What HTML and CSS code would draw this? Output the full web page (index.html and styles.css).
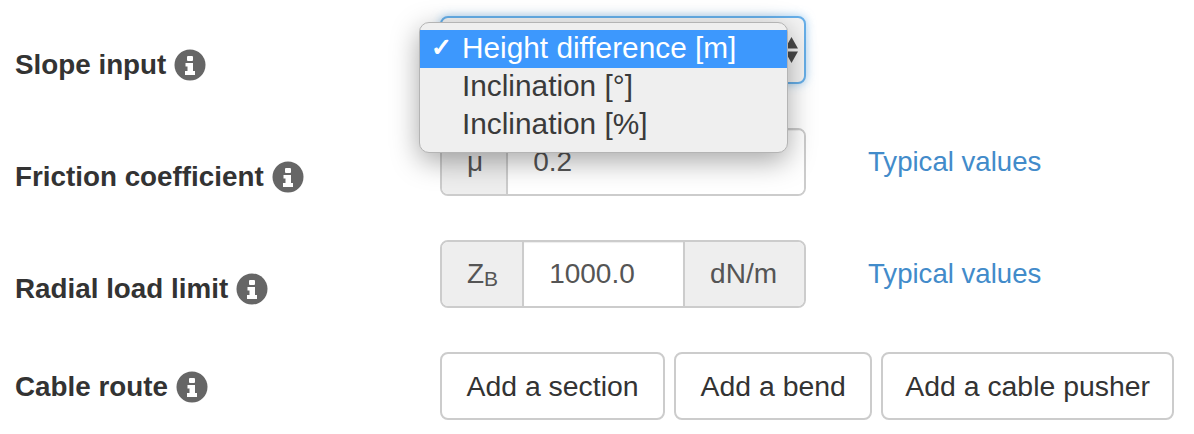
FILE: index.html
```html
<!DOCTYPE html>
<html lang="en">
<head>
  <meta charset="UTF-8" />
  <title>Cable route settings</title>
  <link rel="stylesheet" href="styles.css">
</head>
<body>
  <svg class="defs" width="0" height="0">
    <symbol id="info" viewBox="0 0 32 32">
      <circle cx="16" cy="16" r="15.500" fill="#666" />
      <rect x="13" y="7" width="6" height="5" rx="1" fill="#fff" />
      <path d="M11.500 14h7.500v8h2v4h-10v-4h2.500v-4.500h-2z" fill="#fff" />
    </symbol>
  </svg>

  <form class="settings">
    <div class="row">
      <label class="field-label">Slope input <svg class="info"><use href="#info" /></svg></label>
      <div class="select-wrap">
        <div class="fake-select">
          <svg class="arrows" width="13" height="26" viewBox="0 0 13 26">
            <path d="M6.500 0l6.500 11.500h-13z" fill="#4a4a4a" />
            <path d="M6.500 26l6.500-11.500h-13z" fill="#4a4a4a" />
          </svg>
        </div>
        <ul class="menu">
          <li class="selected"><span class="check">✓</span>Height difference [m]</li>
          <li>Inclination [°]</li>
          <li>Inclination [%]</li>
        </ul>
      </div>
    </div>

    <div class="row">
      <label class="field-label">Friction coefficient <svg class="info"><use href="#info" /></svg></label>
      <div class="input-group">
        <span class="addon">μ</span>
        <input type="text" value="0.2" />
      </div>
      <a class="typical" href="#">Typical values</a>
    </div>

    <div class="row">
      <label class="field-label">Radial load limit <svg class="info"><use href="#info" /></svg></label>
      <div class="input-group">
        <span class="addon">Z<sub>B</sub></span>
        <input class="input-wide" type="text" value="1000.0" />
        <span class="addon addon-right">dN/m</span>
      </div>
      <a class="typical" href="#">Typical values</a>
    </div>

    <div class="row">
      <label class="field-label field-label-center">Cable route <svg class="info"><use href="#info" /></svg></label>
      <div class="buttons">
        <button type="button">Add a section</button>
        <button type="button">Add a bend</button>
        <button class="btn-tight" type="button">Add a cable pusher</button>
      </div>
    </div>
  </form>
</body>
</html>
```

FILE: styles.css
```css
body {
  margin: 0;
  background: #fff;
  color: #333;
  font-family: "Liberation Sans", Arial, sans-serif;
  font-size: 28px;
  overflow: hidden;
}

.defs {
  display: block;
}

.settings {
  display: flex;
  flex-direction: column;
  gap: 44px;
  padding: 16px 0 0 15px;
}

.row {
  display: flex;
  align-items: center;
  height: 68px;
}

.field-label {
  width: 425px;
  flex-shrink: 0;
  display: flex;
  align-items: center;
  gap: 8px;
  padding-top: 30px;
  font-size: 27.8px;
  font-weight: bold;
  color: #333;
}

.field-label-center {
  padding-top: 2px;
}

.info {
  width: 32px;
  height: 32px;
}

/* focused select under the open menu */
.select-wrap {
  position: relative;
  width: 366px;
  height: 68px;
}

.fake-select {
  box-sizing: border-box;
  height: 68px;
  border: 2px solid #66afe9;
  border-radius: 8px;
  box-shadow: 0 0 10px rgba(102, 175, 233, 0.6);
  background: #f4f4f4;
  display: flex;
  align-items: center;
  justify-content: flex-end;
  padding-right: 6px;
}

.menu {
  position: absolute;
  left: -21px;
  top: 6px;
  width: 369px;
  height: 131px;
  box-sizing: border-box;
  margin: 0;
  padding: 7px 0 0;
  list-style: none;
  background: #efefef;
  border: 1px solid #b4b4b4;
  border-radius: 10px;
  box-shadow: 0 8px 28px rgba(0, 0, 0, 0.35);
  font-size: 29.8px;
  color: #3a3a3a;
}

.menu li {
  position: relative;
  height: 38px;
  line-height: 36px;
  padding-left: 42px;
}

.menu .selected {
  background: #3d98fd;
  color: #fff;
}

.check {
  position: absolute;
  left: 11px;
  font-family: "DejaVu Sans", sans-serif;
  font-size: 25px;
  -webkit-text-stroke: 1px #fff;
}

.input-group {
  box-sizing: border-box;
  width: 366px;
  height: 68px;
  display: flex;
  border: 2px solid #ccc;
  border-radius: 8px;
  overflow: hidden;
  color: #555;
}

.addon {
  display: flex;
  align-items: center;
  padding: 0 23px 0 25px;
  background: #eee;
  border-right: 2px solid #ccc;
  flex-shrink: 0;
}

.addon sub {
  font-size: 21px;
  line-height: 1;
  align-self: flex-end;
  margin-bottom: 17px;
  margin-right: 1px;
}

.addon-right {
  padding: 0 27px 0 25px;
  border-right: 0;
  border-left: 2px solid #ccc;
}

.input-group input {
  flex: 1;
  min-width: 0;
  border: 0;
  outline: 0;
  padding: 0 24px 0 25px;
  font: inherit;
  color: #555;
  background: #fff;
  box-shadow: inset 0 1px 1px rgba(0, 0, 0, 0.075);
}

.input-group .input-wide {
  padding-left: 25px;
}

.typical {
  margin-left: 62px;
  color: #428bca;
  font-size: 27.6px;
  text-decoration: none;
}

.buttons {
  display: flex;
  gap: 9px;
}

button {
  box-sizing: border-box;
  height: 68px;
  padding: 0 24.500px;
  background: #fff;
  border: 2px solid #ccc;
  border-radius: 8px;
  font: inherit;
  font-size: 28.4px;
  color: #333;
}

.btn-tight {
  padding: 0 22px;
}
```
